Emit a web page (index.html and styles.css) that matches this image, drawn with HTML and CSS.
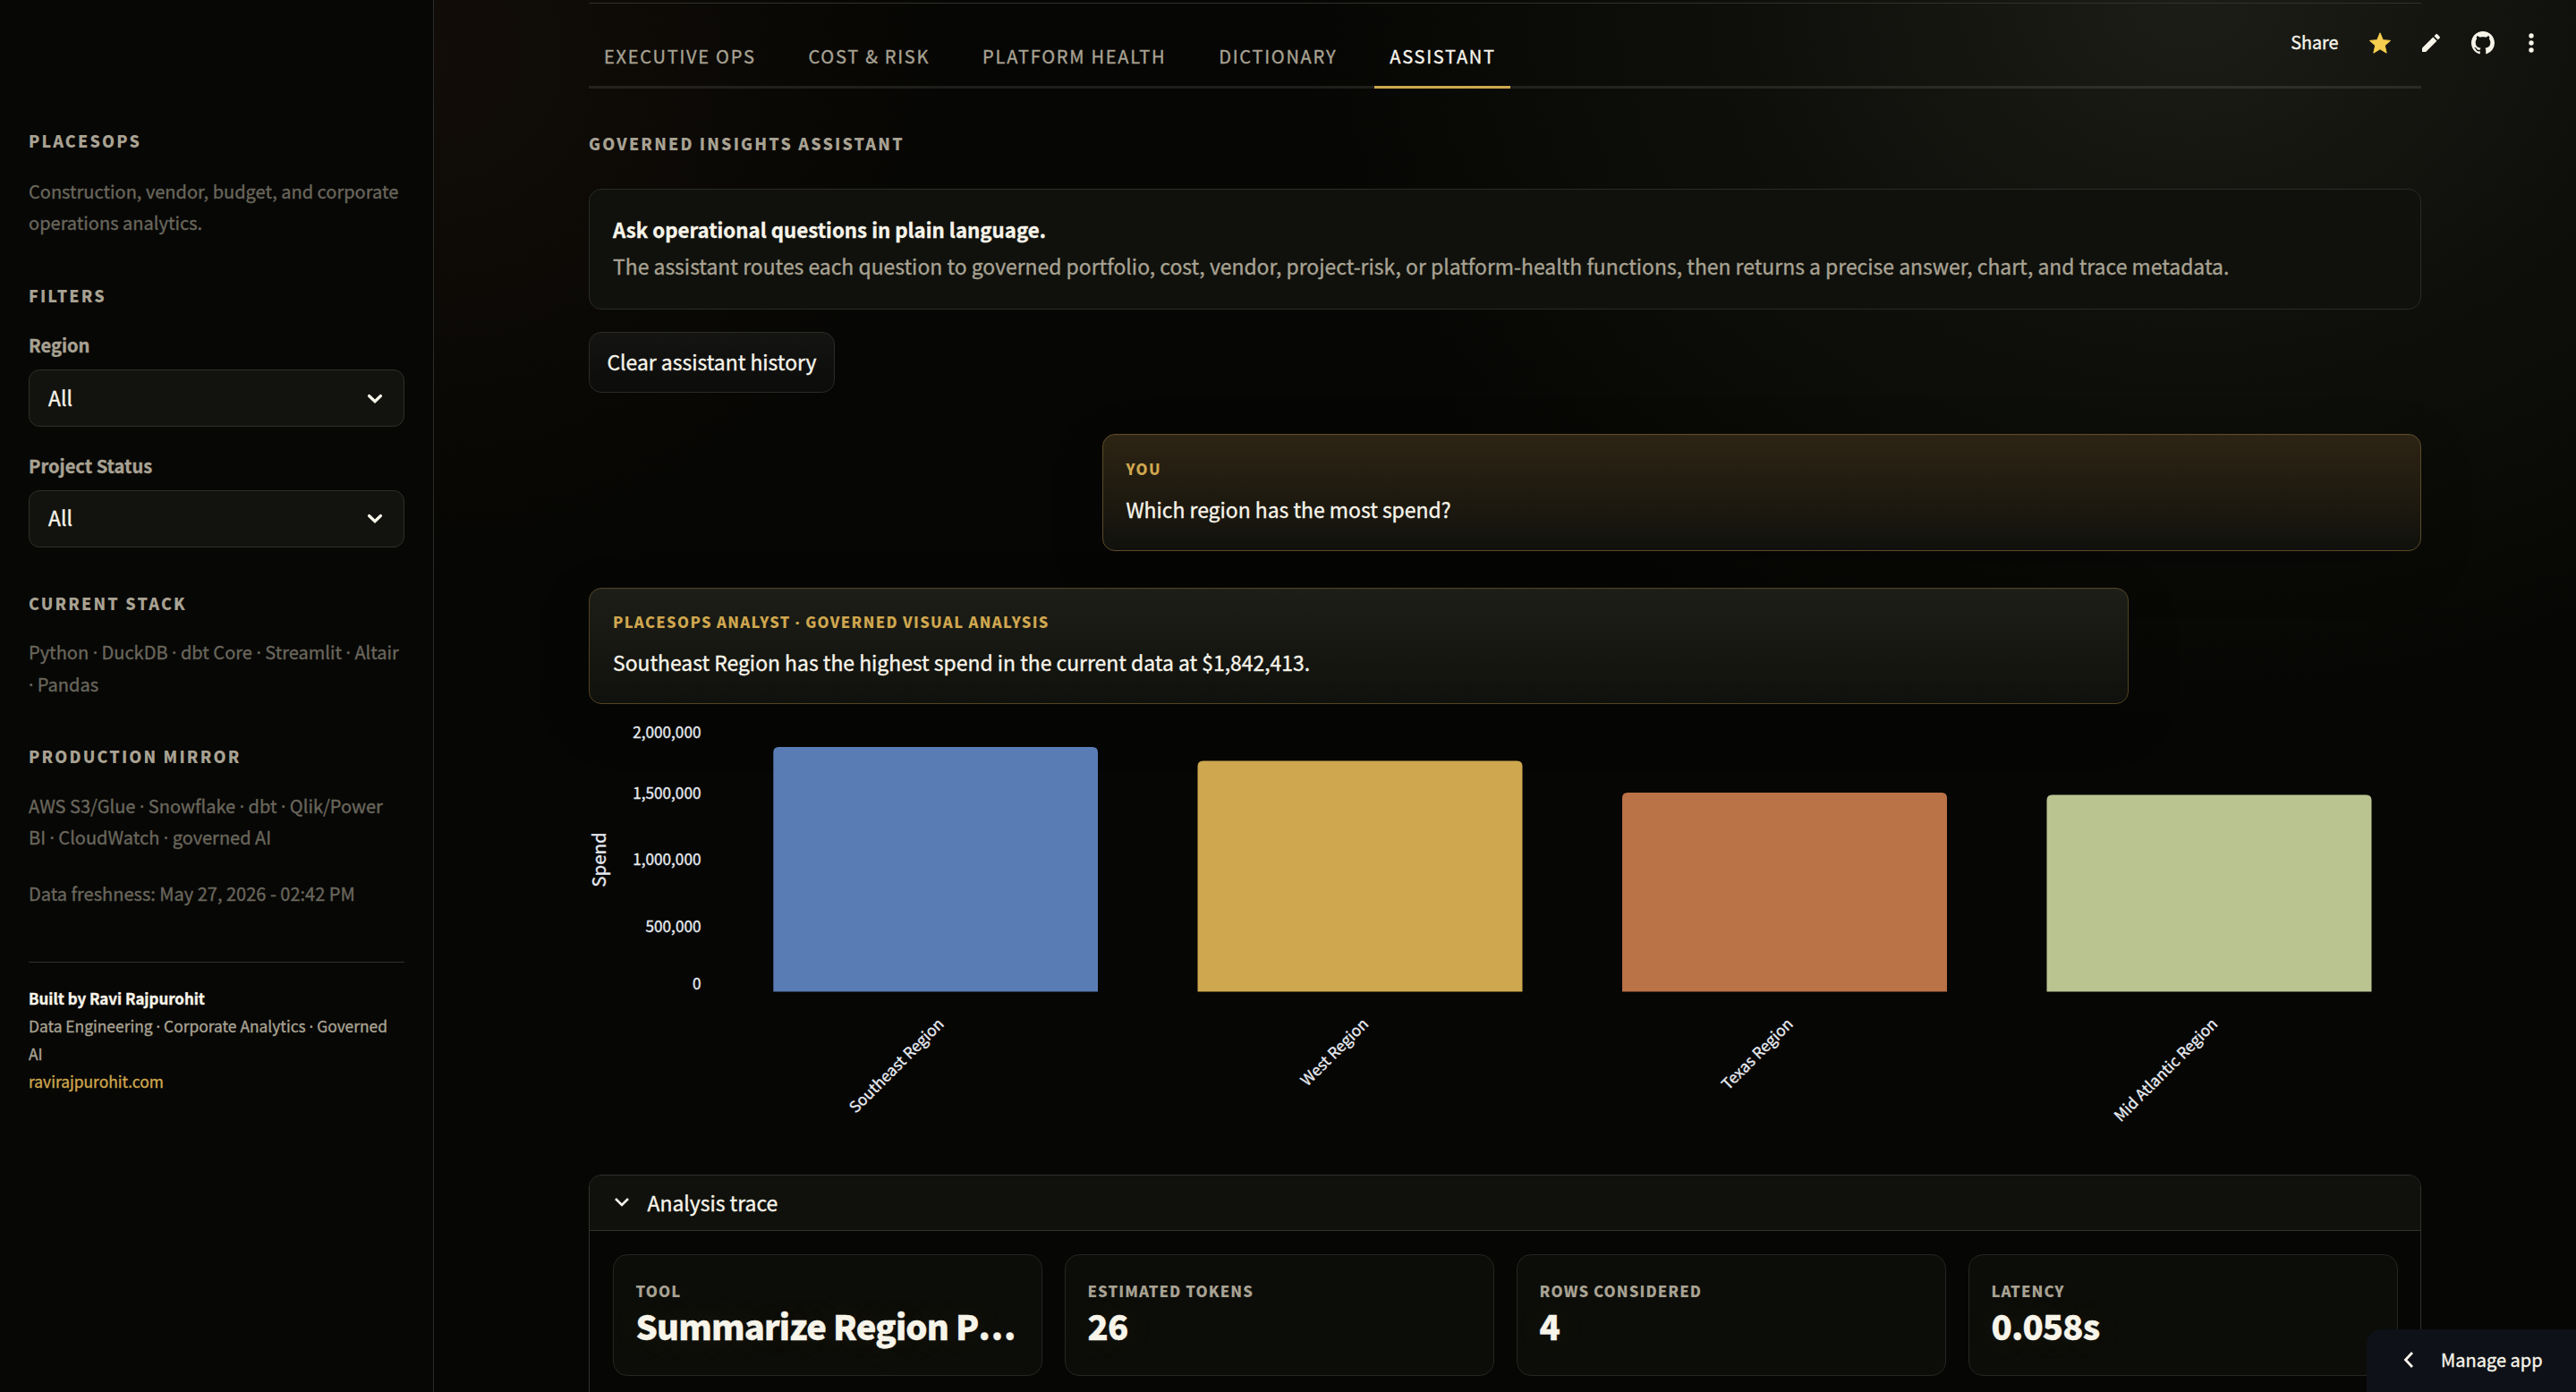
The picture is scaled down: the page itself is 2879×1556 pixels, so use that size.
FILE: index.html
```html
<!DOCTYPE html>
<html lang="en">
<head>
<meta charset="utf-8">
<title>PlacesOps</title>
<link rel="stylesheet" href="styles.css">
</head>
<body>
<div class="app">
  <aside class="sidebar">
    <h2 class="eyebrow">PLACESOPS</h2>
    <p class="note">Construction, vendor, budget, and corporate operations analytics.</p>
    <h2 class="eyebrow eyebrow-filters">FILTERS</h2>
    <div class="field-label">Region</div>
    <div class="select"><span>All</span><svg width="18" height="12" viewBox="0 0 18 12"><path d="M2.5 2.5 9 8.7l6.500-6.200" fill="none" stroke="currentColor" stroke-width="3.200" stroke-linecap="round" stroke-linejoin="miter"/></svg></div>
    <div class="field-label field-label-next">Project Status</div>
    <div class="select"><span>All</span><svg width="18" height="12" viewBox="0 0 18 12"><path d="M2.5 2.5 9 8.7l6.500-6.200" fill="none" stroke="currentColor" stroke-width="3.200" stroke-linecap="round" stroke-linejoin="miter"/></svg></div>
    <h2 class="eyebrow eyebrow-stack">CURRENT STACK</h2>
    <p class="note">Python <i class="dot">·</i> DuckDB <i class="dot">·</i> dbt Core <i class="dot">·</i> Streamlit <i class="dot">·</i> Altair <i class="dot">·</i> Pandas</p>
    <h2 class="eyebrow eyebrow-stack">PRODUCTION MIRROR</h2>
    <p class="note">AWS S3/Glue <i class="dot">·</i> Snowflake <i class="dot">·</i> dbt <i class="dot">·</i> Qlik/Power<br>BI <i class="dot">·</i> CloudWatch <i class="dot">·</i> governed AI</p>
    <p class="note note-fresh">Data freshness: May 27, 2026 - 02:42 PM</p>
    <footer class="credit">
      <strong>Built by Ravi Rajpurohit</strong>
      <p>Data Engineering <i class="dot">·</i> Corporate Analytics <i class="dot">·</i> Governed<br>AI</p>
      <a>ravirajpurohit.com</a>
    </footer>
  </aside>

  <main class="main">
    <nav class="tabs">
      <span class="tab">EXECUTIVE OPS</span>
      <span class="tab">COST &amp; RISK</span>
      <span class="tab">PLATFORM HEALTH</span>
      <span class="tab">DICTIONARY</span>
      <span class="tab active">ASSISTANT</span>
    </nav>
    <h1 class="eyebrow page-title">GOVERNED INSIGHTS ASSISTANT</h1>
    <section class="intro">
      <strong>Ask operational questions in plain language.</strong>
      <p>The assistant routes each question to governed portfolio, cost, vendor, project-risk, or platform-health functions, then returns a precise answer, chart, and trace metadata.</p>
    </section>
    <button class="clear">Clear assistant history</button>

    <section class="bubble user">
      <h3>YOU</h3>
      <p>Which region has the most spend?</p>
    </section>
    <section class="bubble analyst">
      <h3>PLACESOPS ANALYST <i class="dot">·</i> GOVERNED VISUAL ANALYSIS</h3>
      <p>Southeast Region has the highest spend in the current data at $1,842,413.</p>
    </section>

    <svg class="chart" width="2048" height="490" viewBox="0 0 2048 490">
      <g class="ticks" text-anchor="end">
        <text x="125.500" y="25">2,000,000</text>
        <text x="125.500" y="93">1,500,000</text>
        <text x="125.500" y="167">1,000,000</text>
        <text x="125.500" y="242">500,000</text>
        <text x="125.500" y="306">0</text>
      </g>
      <text class="axis" text-anchor="middle" transform="translate(19 161) rotate(-90)">Spend</text>
      <path fill="#5a7cb5" d="M206.300 308.600V41q0-6 6-6H563q6 0 6 6V308.600z"/>
      <path fill="#cfa74f" d="M680.500 308.600V56.400q0-6 6-6H1037.500q6 0 6 6V308.600z"/>
      <path fill="#ba7247" d="M1155 308.600V92q0-6 6-6H1512q6 0 6 6V308.600z"/>
      <path fill="#b9c491" d="M1629.500 308.600V94.500q0-6 6-6H1986.500q6 0 6 6V308.600z"/>
      <g class="names" text-anchor="end">
        <text transform="translate(397.800 345.800) rotate(-45)">Southeast Region</text>
        <text transform="translate(872.300 345.800) rotate(-45)">West Region</text>
        <text transform="translate(1346.800 345.800) rotate(-45)">Texas Region</text>
        <text transform="translate(1821.300 345.800) rotate(-45)">Mid Atlantic Region</text>
      </g>
    </svg>

    <section class="trace">
      <header><svg width="18" height="12" viewBox="0 0 18 12"><path d="M2 2l7 7 7-7" fill="none" stroke="currentColor" stroke-width="2.600"/></svg>Analysis trace</header>
      <div class="metrics">
        <div class="metric"><h4>TOOL</h4><b>Summarize Region P<span class="more-dots">...</span></b></div>
        <div class="metric"><h4>ESTIMATED TOKENS</h4><b>26</b></div>
        <div class="metric"><h4>ROWS CONSIDERED</h4><b>4</b></div>
        <div class="metric"><h4>LATENCY</h4><b>0.058s</b></div>
      </div>
    </section>
  </main>

  <div class="toolbar">
    <span>Share</span>
    <svg class="star" width="24" height="24" viewBox="0 0 24 24"><path fill="#f6ce4f" stroke="#f6ce4f" stroke-linejoin="round" d="M12 .8l3.300 7.900 8.200.7-6.200 5.500 1.900 8.300L12 18.800l-7.200 4.400 1.900-8.300L.5 9.400l8.200-.7z"/></svg>
    <svg class="pencil" width="20" height="20" viewBox="3 3 18 18"><path fill="currentColor" d="M3 17.250V21h3.750L17.810 9.940l-3.750-3.750L3 17.250zM20.710 7.040c.39-.39.39-1.020 0-1.410l-2.340-2.340c-.39-.39-1.020-.39-1.410 0l-1.830 1.830 3.750 3.750 1.830-1.830z"/></svg>
    <svg class="github" width="26" height="26" viewBox="0 0 16 16"><path fill="currentColor" d="M8 0C3.580 0 0 3.580 0 8c0 3.540 2.290 6.530 5.470 7.590.4.070.55-.17.55-.38 0-.19-.01-.82-.01-1.490-2.010.37-2.530-.49-2.690-.94-.09-.23-.48-.94-.82-1.130-.28-.15-.68-.52-.01-.53.63-.01 1.080.58 1.230.82.72 1.210 1.870.87 2.330.66.07-.52.28-.87.51-1.070-1.780-.2-3.640-.89-3.640-3.950 0-.87.31-1.590.82-2.150-.08-.2-.36-1.020.08-2.120 0 0 .67-.21 2.200.82.64-.18 1.320-.27 2-.27s1.360.09 2 .27c1.530-1.040 2.200-.82 2.200-.82.44 1.100.16 1.920.08 2.120.51.56.82 1.270.82 2.150 0 3.070-1.870 3.750-3.650 3.950.29.25.54.73.54 1.480 0 1.070-.01 1.930-.01 2.200 0 .21.15.46.55.38A8.010 8.010 0 0 0 16 8c0-4.420-3.580-8-8-8z"/></svg>
    <svg class="more" width="6" height="24" viewBox="0 0 6 24"><g fill="currentColor"><circle cx="3" cy="4" r="2.700"/><circle cx="3" cy="12" r="2.700"/><circle cx="3" cy="20" r="2.700"/></g></svg>
  </div>
  <div class="manage"><svg width="12" height="20" viewBox="0 0 12 20"><path d="M10 2 2.500 10l7.500 8" fill="none" stroke="currentColor" stroke-width="2.800"/></svg>Manage app</div>
</div>
</body>
</html>
```
FILE: styles.css
```css
* { box-sizing: border-box; }
body {
  margin: 0;
  background: #060604;
  color: #f7f4ea;
  font-family: "Noto Sans CJK SC", sans-serif;
  font-size: 22.910px;
  -webkit-text-stroke: .350px;
}
h1, h2, h3, h4, p { margin: 0; }
svg { display: block; flex: none; }
.dot { font-family: "Noto Sans", sans-serif; font-style: normal; line-height: 0; }

.app {
  position: relative;
  display: flex;
  width: 2879px;
  height: 1556px;
  overflow: hidden;
}

/* Sidebar */
.sidebar {
  width: 485px;
  flex: none;
  padding: 142px 32px 0;
  background: #070705;
  border-right: 1px solid #2b2b27;
}
.eyebrow {
  font-size: 17.900px;
  line-height: 30px;
  font-weight: 900;
  letter-spacing: 2.150px;
  color: #a8a293;
  -webkit-text-stroke: 0;
}
.eyebrow-filters { margin-top: 48px; }
.eyebrow-stack { margin-top: 47.500px; }
.note {
  margin-top: 23.500px;
  font-size: 20.030px;
  line-height: 35.840px;
  color: #69665c;
}
.eyebrow-stack + .note { margin-top: 22.200px; }
.note.note-fresh { margin-top: 26.400px; }
.field-label {
  margin-top: 25px;
  font-size: 20.100px;
  line-height: 32px;
  font-weight: 700;
  color: #a8a293;
}
.field-label-next { margin-top: 27.400px; }
.select {
  display: flex;
  align-items: center;
  justify-content: space-between;
  height: 64px;
  margin-top: 11px;
  padding: 0 23px 3px 21px;
  background: #12130e;
  border: 1px solid #2e2f2a;
  border-radius: 12px;
}
.select svg { margin-top: 4px; }
.credit {
  margin-top: 58.500px;
  padding-top: 24px;
  border-top: 1px solid #30302c;
  font-size: 17.400px;
  line-height: 31px;
  color: #a8a293;
}
.credit strong { display: block; color: #f7f4ea; font-size: 16.900px; }
.credit a { display: block; color: #cfa74f; }

/* Main column */
.main {
  flex: 1;
  min-width: 0;
  padding: 3px 173px 0 173px;
  background:
    radial-gradient(ellipse 1000px 800px at 82% 0, #1c1d17, rgba(20, 21, 15, .6) 50%, rgba(6, 6, 4, 0)),
    radial-gradient(circle 580px at 0 4%, #120d08, rgba(6, 6, 4, 0)),
    #060604;
}
.tabs {
  display: flex;
  gap: 25.400px;
  width: 2048px;
  height: 96px;
  border-top: 1px solid #30312b;
  box-shadow: inset 0 -3px rgba(247, 244, 234, .1);
}
.tab {
  padding: 43px 16.500px 0 17px;
  font-size: 20.030px;
  line-height: 31px;
  letter-spacing: 1.750px;
  color: #a8a293;
}
.tab.active { color: #f7f4ea; box-shadow: inset 0 -3px #cfa74f; }
.page-title { margin-top: 46px; }
.intro {
  width: 2048px;
  height: 135px;
  margin-top: 36px;
  padding: 24.400px 26px 0;
  line-height: 40.200px;
  color: #a8a293;
  background: #10110c;
  border: 1px solid #2a2b26;
  border-radius: 14px;
}
.intro strong { display: block; font-size: 22.270px; color: #f7f4ea; }
.intro p { white-space: nowrap; letter-spacing: .008px; }
.clear {
  display: block;
  width: 275px;
  height: 68px;
  margin-top: 25px;
  padding: 0 0 2px;
  font: inherit;
  color: inherit;
  background: linear-gradient(#141412, #0c0c0b);
  border: 1px solid #2a2b26;
  border-radius: 14px;
}
.bubble {
  border: 1px solid;
  border-radius: 14px;
  padding-left: 26px;
  box-shadow: inset 0 1px rgba(255, 255, 255, .03), 0 18px 60px rgba(0, 0, 0, .2);
}
.bubble h3 {
  font-size: 16.600px;
  line-height: 30px;
  font-weight: 900;
  letter-spacing: 1.330px;
  color: #cfa74f;
  -webkit-text-stroke: 0;
}
.bubble p { margin-top: 9.500px; line-height: 40px; }
.user {
  width: 1474px;
  height: 131px;
  margin: 46px 0 0 574px;
  padding: 23px 0 0 25.500px;
  background: linear-gradient(#2d2414, #1d190f 60%, #10110d);
  border-color: #5c4a26;
}
.analyst {
  width: 1721px;
  height: 130px;
  margin-top: 41px;
  padding-top: 22px;
  background: linear-gradient(#1d1e18, #10110c);
  border-color: #524221;
}
.chart { margin-top: 13px; overflow: visible; fill: #e6eaf1; }
.chart text { stroke: #e6eaf1; stroke-width: .350px; -webkit-text-stroke: 0; }
.ticks, .names { font-size: 17.190px; }
.axis { font-size: 20.500px; }

.trace {
  width: 2048px;
  height: 320px;
  margin-top: 23px;
  border: 1px solid #30312d;
  border-radius: 14px;
  overflow: hidden;
}
.trace header {
  display: flex;
  align-items: center;
  gap: 20px;
  height: 62px;
  padding: 0 0 2px 26.500px;
  background: #10110c;
  border-bottom: 1px solid #30312d;
}
.metrics { display: grid; grid-template-columns: repeat(4, 479.500px); gap: 25.500px; padding: 26px 26px; }
.metric {
  height: 136px;
  padding: 25px 24.500px 0;
  background: #0c0d09;
  border: 1px solid #252622;
  border-radius: 16px;
  white-space: nowrap;
}
.metric h4 {
  font-size: 16.800px;
  line-height: 30px;
  font-weight: 900;
  letter-spacing: 1.050px;
  color: #a8a293;
  -webkit-text-stroke: 0;
}
.metric b {
  display: block;
  font-size: 38.200px;
  line-height: 48px;
  font-weight: 900;
  letter-spacing: -.850px;
  text-shadow: 0 0 36px rgba(207, 167, 79, .12);
}
.more-dots { letter-spacing: .900px; }

/* Floating controls */
.toolbar {
  position: absolute;
  top: 30px;
  right: 47px;
  display: flex;
  align-items: center;
  height: 36px;
  font-size: 19.800px;
}
.toolbar span { margin: -3px 34px 0 0; }
.star { margin-right: 35px; }
.pencil { margin-right: 35px; }
.github { margin-right: 38.500px; }
.manage {
  position: absolute;
  right: 0;
  bottom: 0;
  display: flex;
  align-items: center;
  gap: 30px;
  width: 234px;
  height: 70px;
  padding: 0 0 3px 41px;
  font-size: 20px;
  background: #0e1117;
  border-top-left-radius: 16px;
}
```
